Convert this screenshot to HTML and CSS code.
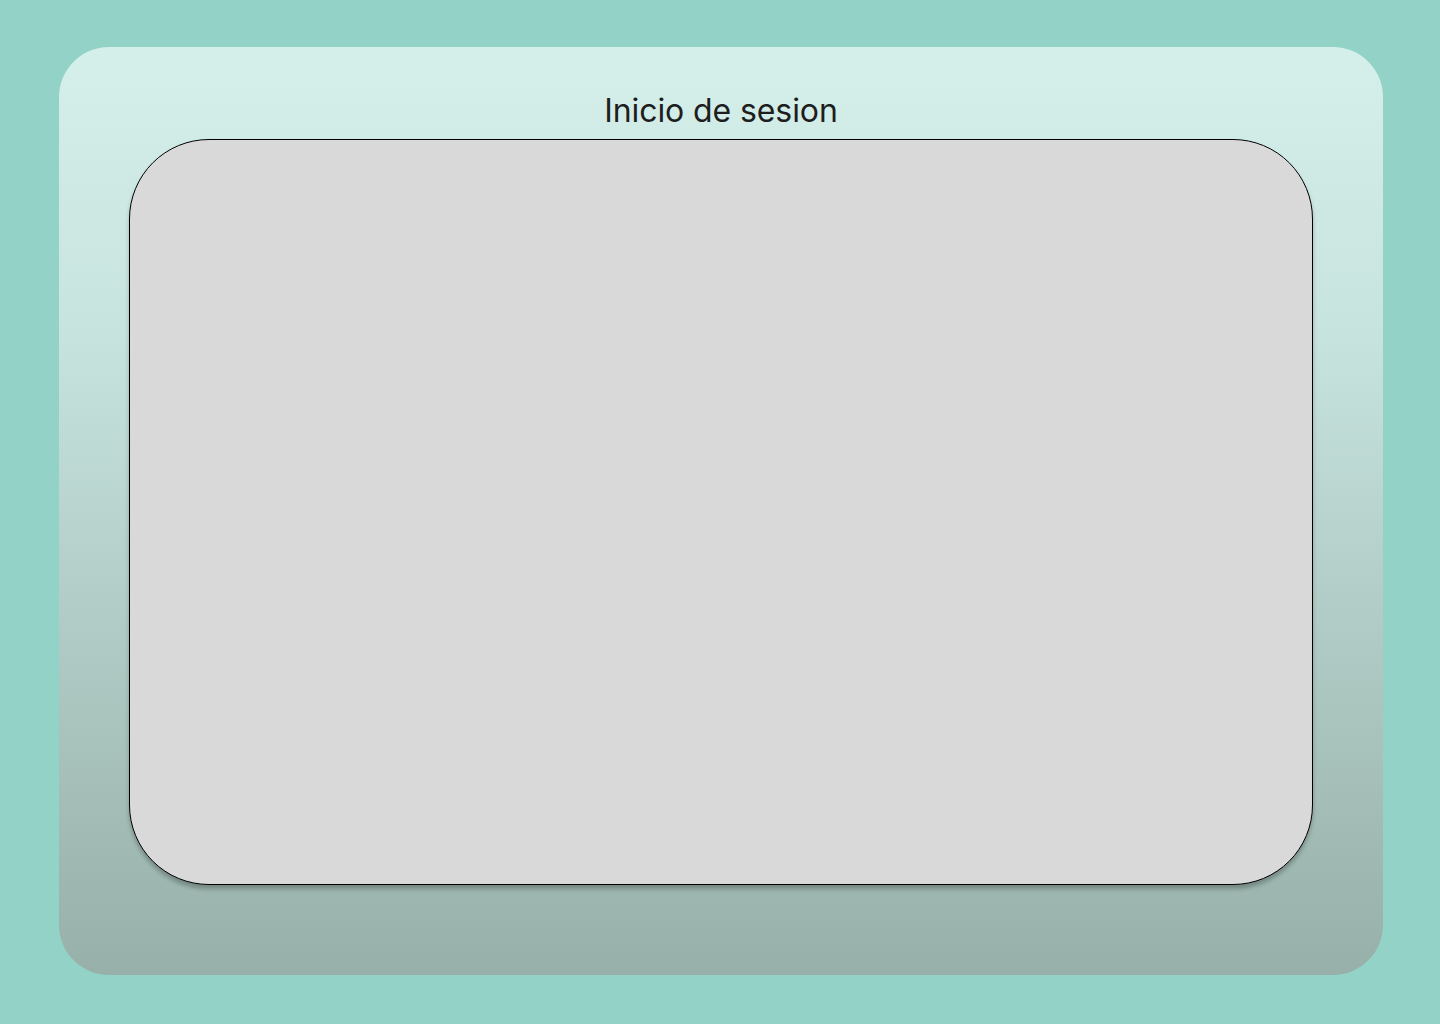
FILE: index.html
```html
<!DOCTYPE html>
<html lang="es">
<head>
<meta charset="utf-8">
<title>Inicio de sesion</title>
<link rel="stylesheet" href="styles.css">
</head>
<body>
<main class="panel">
  <h1 class="title">Inicio de sesion</h1>
  <section class="card"></section>
</main>
</body>
</html>
```

FILE: styles.css
```css
html, body {
  margin: 0;
  padding: 0;
}
body {
  width: 1440px;
  height: 1024px;
  background: #93d3c7;
  font-family: Inter, "Noto Sans", sans-serif;
  box-sizing: border-box;
  padding: 47px 57px 49px 59px;
}
.panel {
  box-sizing: border-box;
  width: 1324px;
  height: 928px;
  border-radius: 50px;
  background: linear-gradient(180deg, #d5efea 0%, #c8e4de 30%, #b2cdc7 60%, #97b0a9 100%);
  padding: 44px 70px 0 70px;
  display: flex;
  flex-direction: column;
}
.title {
  margin: 0 0 9px 0;
  font-size: 32px;
  font-weight: 400;
  line-height: 39px;
  letter-spacing: -0.1px;
  color: #1e1e1e;
  text-align: center;
}
.card {
  box-sizing: border-box;
  width: 1184px;
  height: 746px;
  background: #d9d9d9;
  border: 1px solid #000;
  border-radius: 80px;
  box-shadow: 0 4px 4px rgba(0, 0, 0, 0.25);
}
```
